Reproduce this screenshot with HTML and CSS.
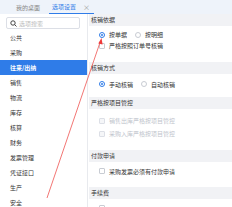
FILE: index.html
```html
<!DOCTYPE html>
<html lang="zh">
<head>
<meta charset="utf-8">
<link rel="stylesheet" href="styles.css">
</head>
<body>
<div class="page">
  <div class="topbar">
    <div class="tab">我的桌面</div>
    <div class="tab active">选项设置<span class="close">×</span></div>
  </div>
  <div class="main">
    <aside class="sidebar">
      <div class="search">
        <svg class="mag" width="7" height="7" viewBox="0 0 7 7"><circle cx="3" cy="3" r="2.2" fill="none" stroke="#333" stroke-width="0.9"/><path d="M4.6 4.6L6.5 6.5" stroke="#333" stroke-width="0.9"/></svg>
        <span class="ph">选项搜索</span>
      </div>
      <ul class="menu">
        <li>公共</li>
        <li>采购</li>
        <li class="on">往来/出纳</li>
        <li>销售</li>
        <li>物流</li>
        <li>库存</li>
        <li>核算</li>
        <li>财务</li>
        <li>发票管理</li>
        <li>凭证接口</li>
        <li>生产</li>
        <li>安全</li>
      </ul>
    </aside>
    <section class="content">
      <div class="hd">核销依据</div>
      <div class="row r1">
        <span class="radio checked"></span><span class="lbl">按单据</span>
        <span class="radio"></span><span class="lbl">按明细</span>
      </div>
      <div class="row r2"><span class="cb"></span><span class="lbl">严格按照订单号核销</span></div>
      <div class="hd h2">核销方式</div>
      <div class="row r3">
        <span class="radio checked"></span><span class="lbl">手动核销</span>
        <span class="radio"></span><span class="lbl">自动核销</span>
      </div>
      <div class="hd h3">严格按项目管控</div>
      <div class="row r4 dis"><span class="cb"></span><span class="lbl">销售出库严格按项目管控</span></div>
      <div class="row r5 dis"><span class="cb"></span><span class="lbl">采购入库严格按项目管控</span></div>
      <div class="hd h4">付款申请</div>
      <div class="row r6"><span class="cb"></span><span class="lbl">采购发票必须有付款申请</span></div>
      <div class="hd h5">手续费</div>
      <div class="row r7"><span class="cb"></span></div>
    </section>
  </div>
  <svg class="arrow" width="232" height="207" viewBox="0 0 232 207">
    <path d="M47 198 L100.5 41" stroke="#ef5350" stroke-width="0.8" fill="none"/>
    <path d="M101.5 38 L98.3 43.5 L102.6 44.5 Z" fill="#ef3a3a"/>
  </svg>
</div>
</body>
</html>
```
FILE: styles.css
```css
* { box-sizing: border-box; margin: 0; padding: 0; }
html, body { width: 232px; height: 207px; overflow: hidden; background: #fff; }
body { font-family: "Noto Sans CJK SC", "Noto Sans", sans-serif; font-size: 6px; color: #333; }
.page { position: relative; width: 232px; height: 207px; overflow: hidden; }
.topbar { height: 14px; background: #eef3fa; display: flex; align-items: stretch; padding-left: 13px; gap: 6px; }
.tab { display: flex; align-items: center; padding: 0 3px; color: #888; font-size: 6px; }
.tab.active { color: #2f7ce8; border-bottom: 1px solid #2f7ce8; padding-right: 4px; }
.close { color: #999; font-size: 7px; margin-left: 7px; }
.main { display: flex; height: 193px; overflow: hidden; }
.sidebar { width: 88px; flex: none; border-right: 1px solid #e8eaee; padding-top: 3px; }
.search { margin: 0 7px 0 6px; height: 12px; border: 1px solid #dcdfe6; border-radius: 2px; display: flex; align-items: center; padding-left: 3px; gap: 2px; }
.ph { color: #bbb; font-size: 6px; }
.menu { list-style: none; margin-top: 1px; }
.menu li { height: 15px; line-height: 15px; padding-left: 10px; color: #333; }
.menu li.on { background: #2f7ce8; color: #fff; font-weight: bold; }
.content { flex: 1; padding-left: 1px; overflow: hidden; }
.hd { height: 12px; line-height: 12px; background: #f1f2f5; padding-left: 2px; color: #333; }
.row { display: flex; align-items: center; padding-left: 10px; height: 11px; }
.r1 { margin-top: 3px; }
.h2 { margin-top: 11px; }
.r3 { margin-top: 4px; height: 12px; }
.h3 { margin-top: 7px; }
.r4 { margin-top: 5px; height: 13px; }
.r5 { height: 13px; }
.h4 { margin-top: 10px; }
.r6 { margin-top: 3px; height: 12px; }
.h5 { margin-top: 10px; }
.r7 { margin-top: 3px; }
.radio { width: 6px; height: 6px; border-radius: 50%; border: 1px solid #c8ccd3; margin-right: 4px; position: relative; flex: none; }
.radio.checked { border-color: #2f7ce8; }
.radio.checked::after { content: ""; position: absolute; left: 1px; top: 1px; width: 2px; height: 2px; border-radius: 50%; background: #2f7ce8; }
.lbl { margin-right: 8px; }
.cb { width: 6px; height: 6px; border: 1px solid #c8ccd3; border-radius: 1px; margin-right: 4px; flex: none; }
.dis .lbl { color: #c0c4cc; }
.dis .cb { background: #f5f6f8; border-color: #dcdfe6; }
.arrow { position: absolute; left: 0; top: 0; pointer-events: none; }
```
